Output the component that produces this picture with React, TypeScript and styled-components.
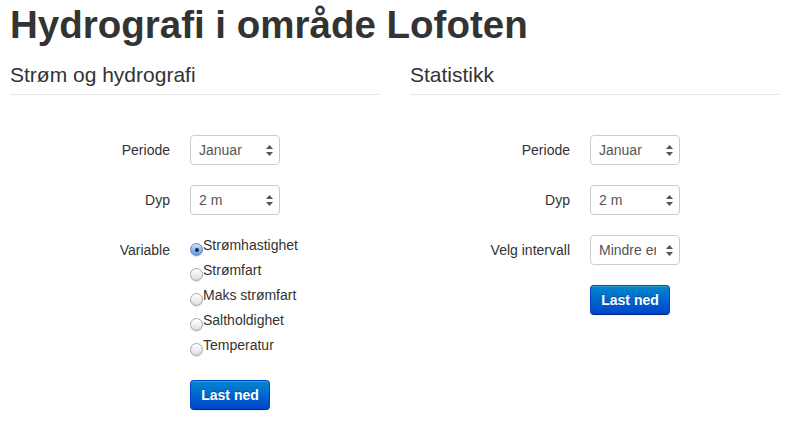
import React from "react";
import styled, { createGlobalStyle } from "styled-components";

const GlobalStyle = createGlobalStyle`
  html, body {
    margin: 0;
    padding: 0;
    background: #ffffff;
  }
  body {
    font-family: "Liberation Sans", Helvetica, Arial, sans-serif;
    font-size: 14px;
    line-height: 20px;
    color: #333333;
  }
`;

const Page = styled.div`
  width: 793px;
  box-sizing: border-box;
  padding: 0 10px;
`;

const Title = styled.h1`
  margin: 5px 0 0;
  font-size: 38.5px;
  line-height: 40px;
  font-weight: bold;
  color: #333333;
`;

const Columns = styled.div`
  display: grid;
  grid-template-columns: 370px 370px;
  column-gap: 30px;
`;

const Section = styled.section`
  display: flex;
  flex-direction: column;
`;

const Heading = styled.h3`
  margin: 15px 0 0;
  padding-bottom: 4px;
  border-bottom: 1px solid #e5e5e5;
  font-size: 21px;
  line-height: 30px;
  font-weight: normal;
  color: #333333;
`;

const Form = styled.form`
  margin-top: 40px;
`;

const Group = styled.div`
  display: grid;
  grid-template-columns: 160px 1fr;
  column-gap: 20px;
  margin-bottom: 20px;
`;

const Label = styled.div`
  text-align: right;
  padding-top: 5px;
  line-height: 20px;
  white-space: nowrap;
`;

const Controls = styled.div`
  display: flex;
  flex-direction: column;
  align-items: flex-start;
`;

const SelectBox = styled.div`
  width: 90px;
  height: 30px;
  box-sizing: border-box;
  border: 1px solid #cccccc;
  border-radius: 4px;
  background: #ffffff;
  display: flex;
  align-items: center;
  padding: 0 6px 0 8px;
  color: #555555;
  line-height: 28px;
`;

const SelectValue = styled.span`
  width: 57px;
  overflow: hidden;
  white-space: nowrap;
`;

const Arrows = styled.svg`
  margin-left: auto;
  display: block;
`;

const Select: React.FC<{ value: string }> = ({ value }) => (
  <SelectBox>
    <SelectValue>{value}</SelectValue>
    <Arrows width="7" height="11" viewBox="0 0 7 11">
      <polygon points="0,4 3.5,0 7,4" fill="#555" />
      <polygon points="0,7 3.5,11 7,7" fill="#555" />
    </Arrows>
  </SelectBox>
);

const Option = styled.label`
  display: flex;
  align-items: flex-start;
  height: 20px;
  line-height: 20px;
  margin-bottom: 5px;
  color: #333333;
  white-space: nowrap;
`;

const Circle = styled.span<{ $checked?: boolean }>`
  width: 13px;
  height: 13px;
  margin-top: 8px;
  box-sizing: border-box;
  border-radius: 50%;
  flex: none;
  position: relative;
  border: 1px solid ${(p) => (p.$checked ? "#5a87c8" : "#a8a8a8")};
  background: ${(p) =>
    p.$checked
      ? "linear-gradient(to bottom, #cfe3fb 0%, #8cbcf0 50%, #5f9de6 100%)"
      : "linear-gradient(to bottom, #ffffff 0%, #f0f0f0 50%, #dcdcdc 100%)"};
  box-shadow: 0 1px 1px rgba(0, 0, 0, 0.12);

  &::after {
    content: "";
    display: ${(p) => (p.$checked ? "block" : "none")};
    position: absolute;
    left: 3.5px;
    top: 3.5px;
    width: 4px;
    height: 4px;
    border-radius: 50%;
    background: #1e2a3a;
  }
`;

const Radio: React.FC<{ label: string; checked?: boolean }> = ({ label, checked }) => (
  <Option>
    <Circle $checked={checked} />
    {label}
  </Option>
);

const Button = styled.button`
  width: 80px;
  height: 30px;
  box-sizing: border-box;
  padding: 0;
  border: 1px solid #0044cc;
  border-bottom-color: #002a80;
  border-radius: 4px;
  background: linear-gradient(to bottom, #0088cc, #0044cc);
  color: #ffffff;
  font-family: "Liberation Sans", Helvetica, Arial, sans-serif;
  font-size: 14px;
  font-weight: bold;
  text-shadow: 0 -1px 0 rgba(0, 0, 0, 0.25);
  box-shadow: inset 0 1px 0 rgba(255, 255, 255, 0.2), 0 1px 2px rgba(0, 0, 0, 0.05);
  cursor: pointer;
`;

const variables = ["Strømhastighet", "Strømfart", "Maks strømfart", "Saltholdighet", "Temperatur"];

export default function App() {
  return (
    <>
      <GlobalStyle />
      <Page>
        <Title>Hydrografi i område Lofoten</Title>
        <Columns>
          <Section>
            <Heading>Strøm og hydrografi</Heading>
            <Form>
              <Group>
                <Label>Periode</Label>
                <Controls>
                  <Select value="Januar" />
                </Controls>
              </Group>
              <Group>
                <Label>Dyp</Label>
                <Controls>
                  <Select value="2 m" />
                </Controls>
              </Group>
              <Group>
                <Label>Variable</Label>
                <Controls>
                  {variables.map((v, i) => (
                    <Radio key={v} label={v} checked={i === 0} />
                  ))}
                </Controls>
              </Group>
              <Group>
                <Label />
                <Controls>
                  <Button type="button">Last ned</Button>
                </Controls>
              </Group>
            </Form>
          </Section>
          <Section>
            <Heading>Statistikk</Heading>
            <Form>
              <Group>
                <Label>Periode</Label>
                <Controls>
                  <Select value="Januar" />
                </Controls>
              </Group>
              <Group>
                <Label>Dyp</Label>
                <Controls>
                  <Select value="2 m" />
                </Controls>
              </Group>
              <Group>
                <Label>Velg intervall</Label>
                <Controls>
                  <Select value="Mindre enn" />
                </Controls>
              </Group>
              <Group>
                <Label />
                <Controls>
                  <Button type="button">Last ned</Button>
                </Controls>
              </Group>
            </Form>
          </Section>
        </Columns>
      </Page>
    </>
  );
}
